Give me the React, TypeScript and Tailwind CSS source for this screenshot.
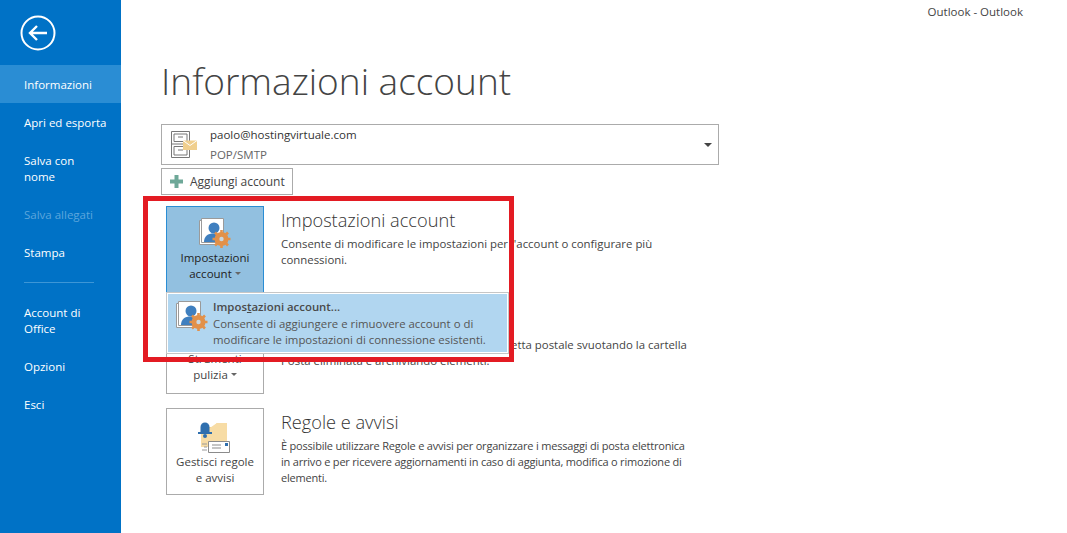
import { ReactNode } from "react";

const FONT = "font-['Open_Sans','Noto_Sans',sans-serif]";

function BackIcon() {
  return (
    <svg width="36" height="36" viewBox="0 0 36 36" fill="none" stroke="#fff">
      <circle cx="18" cy="18" r="16.5" strokeWidth="2" />
      <path d="M27 18H10M17 11l-7 7 7 7" strokeWidth="2.4" />
    </svg>
  );
}

function CabinetIcon() {
  return (
    <svg width="28" height="30" viewBox="0 0 28 30" fill="none">
      <path d="M1.5 1.5h18v26h-18zM1.5 14h18M4 4h13v7.5H4zM4 16.5h13V25H4z" stroke="#777" />
      <path d="M8 7h5M8 20h5" stroke="#777" />
      <path d="M13 10.5h14V20H13z" fill="#f0cf8e" />
      <path d="M13 10.5l7 5 7-5" stroke="#fff" />
    </svg>
  );
}

function GearPersonIcon() {
  return (
    <svg width="32" height="31" viewBox="0 0 32 31" fill="none">
      <path d="M.5 2.5h22v24H.5z" fill="#fff" stroke="#9a9a9a" />
      <path d="M2.5 .5h22v24h-22z" fill="#fff" stroke="#9a9a9a" />
      <circle cx="15" cy="10" r="5.5" fill="#3f7fbf" />
      <path d="M5 24c0-6 4-8.500 9.500-8.500S21 18 22 24z" fill="#3f7fbf" />
      <circle cx="22.500" cy="21" r="5" fill="none" stroke="#e2914a" strokeWidth="4" />
      <path d="M22.500 12v18M13.500 21h18M16 14.500l13 13M29 14.500l-13 13" stroke="#e2914a" strokeWidth="2.600" />
      <circle cx="22.500" cy="21" r="2.200" fill="#c9d8e2" />
    </svg>
  );
}

function RulesIcon() {
  return (
    <svg width="34" height="34" viewBox="0 0 34 34" fill="none">
      <path d="M3 7h12l4-4h10v24H3z" fill="#f3cf87" />
      <path d="M19 3h10v24H3V14z" fill="#f7dca5" />
      <path d="M2.500 7a4.500 4.500 0 0 1 9 0v5h-9z" fill="#2f6fae" />
      <path d="M0 13h14" stroke="#2f6fae" strokeWidth="2" />
      <circle cx="7" cy="16" r="2" fill="#2f6fae" />
      <path d="M10.500 21.500h21v11h-21z" fill="#fff" stroke="#8b8b8b" />
      <path d="M14 28h9M14 25h9" stroke="#8b8b8b" />
      <path d="M27 23h3v3h-3z" fill="#2f6fae" />
      <path d="M4 24h5M6 27h3M4 30h5" stroke="#9a9a9a" />
    </svg>
  );
}

function Caret() {
  return <span className="inline-block ml-[3px] mb-[2px] align-middle border-x-[3px] border-t-[3px] border-x-transparent border-t-[#666]" />;
}

function SideItem({ children, active, disabled }: { children: ReactNode; active?: boolean; disabled?: boolean }) {
  return (
    <div
      className={`pl-6 pr-2 pt-[12px] pb-[10px] text-[11.5px] leading-4 ${active ? "bg-[#2a8dd4]" : ""} ${disabled ? "text-[#5da6dc]" : "text-white"}`}
    >
      {children}
    </div>
  );
}

function Sidebar() {
  return (
    <aside className="w-[121px] shrink-0 bg-[#0072c6] pt-[15px]">
      <div className="pl-5 h-[50px]">
        <BackIcon />
      </div>
      <SideItem active>Informazioni</SideItem>
      <SideItem>Apri ed esporta</SideItem>
      <SideItem>
        Salva con
        <br />
        nome
      </SideItem>
      <SideItem disabled>Salva allegati</SideItem>
      <SideItem>Stampa</SideItem>
      <div className="ml-6 mr-[27px] mt-[11px] mb-[10px] h-px bg-[#3d96d6]" />
      <SideItem>
        Account di
        <br />
        Office
      </SideItem>
      <SideItem>Opzioni</SideItem>
      <SideItem>Esci</SideItem>
    </aside>
  );
}

function ActionSection({
  icon,
  label,
  title,
  selected,
  iconHeight = "h-[43px]",
  descClass = "text-[11.4px]",
  children,
}: {
  icon: ReactNode;
  label: ReactNode;
  title: string;
  selected?: boolean;
  iconHeight?: string;
  descClass?: string;
  children: ReactNode;
}) {
  return (
    <section className="flex">
      <div
        className={`w-[98px] h-[87px] shrink-0 border flex flex-col items-center text-center text-[11.5px] leading-4 ${selected ? "bg-[#92c0e0] border-[#2a8dd4] text-[#222]" : "bg-white border-[#ababab] text-[#444]"}`}
      >
        <div className={`${iconHeight} pt-[11px] flex justify-center`}>{icon}</div>
        <div>{label}</div>
      </div>
      <div className="ml-[17px] pt-[1px] w-[412px]">
        <h2 className="text-[18.2px] leading-[26px] font-light text-[#333]">{title}</h2>
        <p className={`mt-[3px] leading-4 text-[#444] ${descClass}`}>{children}</p>
      </div>
    </section>
  );
}

export default function App() {
  return (
    <div className={`relative flex w-[1067px] h-[533px] overflow-hidden bg-white ${FONT}`}>
      <Sidebar />
      <main className="relative flex-1 pl-10">
        <div className="absolute top-[4px] right-[44px] text-[11.5px] leading-4 text-[#444]">Outlook - Outlook</div>
        <h1 className="pt-[56px] text-[37px] leading-[50px] font-light text-[#444]">Informazioni account</h1>

        <div className="mt-[18px] w-[558px] h-[41px] border border-[#ababab] flex items-center relative">
          <div className="ml-[8px] w-[40px]">
            <CabinetIcon />
          </div>
          <div className="text-[11.5px] leading-[20px]">
            <div className="text-[#333]">paolo@hostingvirtuale.com</div>
            <div className="text-[#666]">POP/SMTP</div>
          </div>
          <span className="absolute right-[6px] top-[18px] border-x-[4px] border-t-[4px] border-x-transparent border-t-[#444]" />
        </div>

        <div className="mt-[3px] w-[132px] h-[27px] border border-[#ababab] flex items-center text-[12px] tracking-[-0.05px] text-[#444]">
          <svg className="ml-[8px] mr-[7px]" width="13" height="13" viewBox="0 0 13 13">
            <path d="M4.5 0h4v4.5H13v4H8.5V13h-4V8.5H0v-4h4.5z" fill="#6ea898" />
          </svg>
          Aggiungi account
        </div>

        <div className="mt-[11px] ml-[5px] flex flex-col gap-[14px]">
          <ActionSection
            selected
            icon={<GearPersonIcon />}
            label={
              <>
                Impostazioni
                <br />
                account
                <Caret />
              </>
            }
            title="Impostazioni account"
          >
            Consente di modificare le impostazioni per l'account o configurare più connessioni.
          </ActionSection>
          <ActionSection
            icon={null}
            label={
              <>
                Strumenti
                <br />
                pulizia
                <Caret />
              </>
            }
            title="Pulizia cassetta postale"
          >
            Consente di gestire le dimensioni della cassetta postale svuotando la cartella Posta eliminata e archiviando elementi.
          </ActionSection>
          <ActionSection
            iconHeight="h-[45px]"
            descClass="text-[11px] tracking-[-0.2px]"
            icon={<RulesIcon />}
            label={
              <>
                Gestisci regole
                <br />e avvisi
              </>
            }
            title="Regole e avvisi"
          >
            È possibile utilizzare Regole e avvisi per organizzare i messaggi di posta elettronica in arrivo e per ricevere aggiornamenti in caso di aggiunta, modifica o rimozione di elementi.
          </ActionSection>
        </div>
      </main>

      {/* dropdown opened from the account settings button */}
      <div className="absolute left-[166px] top-[292px] w-[343px] h-[62px] bg-white border border-[#c6c6c6] p-px">
        <div className="h-full bg-[#b1d6f0] flex pl-[8px] pt-[7px]">
          <div className="w-[37px] shrink-0">
            <GearPersonIcon />
          </div>
          <div className="text-[11.4px] leading-[16px] text-[#555] -mt-[2px]">
            <div className="font-semibold text-[#4a4a4a]">
              Impos<span className="underline">t</span>azioni account...
            </div>
            <div className="mt-px">Consente di aggiungere e rimuovere account o di</div>
            <div>modificare le impostazioni di connessione esistenti.</div>
          </div>
        </div>
      </div>

      {/* red highlight drawn on the screenshot */}
      <div className="absolute left-[143px] top-[196px] w-[371px] h-[166px] border-[5px] border-[#e31b23]" />
    </div>
  );
}
